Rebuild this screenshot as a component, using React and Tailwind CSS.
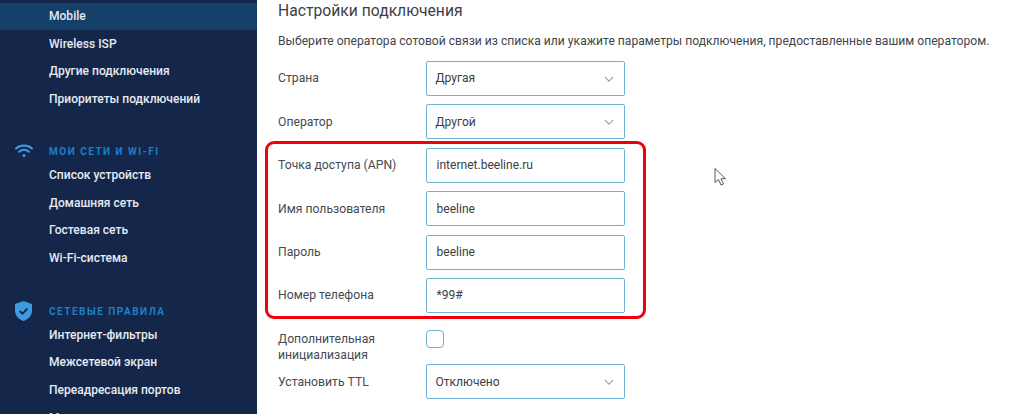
import React from "react";

const font = { fontFamily: '"Roboto", "Liberation Sans", sans-serif' };

function NavRow({ children, active }) {
  return (
    <div className={`h-[27.6px] pl-[49px] flex items-center text-[12.05px] font-medium text-[#e6ebf2] ${active ? "bg-[#14406a]" : ""}`}>
      {children}
    </div>
  );
}

function Heading({ icon, children, className }) {
  return (
    <div className={`h-[20px] flex items-center ${className}`}>
      <div className="w-[49px] pl-[15px] shrink-0 flex items-center">{icon}</div>
      <span className="text-[10px] font-bold tracking-[1.5px] text-[#1b80c8]">{children}</span>
    </div>
  );
}

const Wifi = (
  <svg width="18" height="14" viewBox="0 0 18 14" fill="none" stroke="#3d9be0" strokeWidth="2" strokeLinecap="round">
    <path d="M1 4.6C5.6 .6 12.4 .6 17 4.6" />
    <path d="M4 7.8c3-2.5 7-2.5 10 0" />
    <circle cx="9" cy="11.6" r="1.5" fill="#3d9be0" stroke="none" />
  </svg>
);

const Shield = (
  <svg width="17" height="20" viewBox="0 0 17 20" className="mt-[-1px]">
    <path d="M8.5 0 17 3v6.6c0 5-3.4 8.600-8.500 10.400C3.400 18.200 0 14.600 0 9.600V3z" fill="#3d9be0" />
    <path d="M4.700 10l2.800 2.700 5-5" fill="none" stroke="#14274a" strokeWidth="1.800" />
  </svg>
);

function Chevron() {
  return (
    <svg width="10" height="6" viewBox="0 0 12 7" fill="none" stroke="#7fa9c8" strokeWidth="1.400">
      <path d="M1 1l5 5 5-5" />
    </svg>
  );
}

function Field({ label, value, select }) {
  return (
    <div className="flex items-center h-[35px] mb-[8.400px]">
      <div className="w-[148px] shrink-0 text-[12.2px] text-[#444b52]">{label}</div>
      <div className={`w-[199px] h-[35px] border-[1.500px] border-[#6fb4d6] rounded-[2px] flex items-center justify-between text-[12.05px] text-[#3a4046] bg-white ${select ? "pl-[8.500px] pr-[10px]" : "pl-[9.500px]"}`}>
        <span>{value}</span>
        {select && <Chevron />}
      </div>
    </div>
  );
}

export default function App() {
  return (
    <div style={font} className="relative w-[1024px] h-[414px] overflow-hidden bg-white flex">
      <aside className="w-[257px] shrink-0 h-full overflow-hidden bg-[#14274a] pt-[2.500px]">
        <NavRow active>Mobile</NavRow>
        <NavRow>Wireless ISP</NavRow>
        <NavRow>Другие подключения</NavRow>
        <NavRow>Приоритеты подключений</NavRow>
        <Heading icon={Wifi} className="mt-[28.300px]">МОИ СЕТИ И WI-FI</Heading>
        <NavRow>Список устройств</NavRow>
        <NavRow>Домашняя сеть</NavRow>
        <NavRow>Гостевая сеть</NavRow>
        <NavRow>Wi-Fi-система</NavRow>
        <Heading icon={Shield} className="mt-[29.500px]">СЕТЕВЫЕ ПРАВИЛА</Heading>
        <NavRow>Интернет-фильтры</NavRow>
        <NavRow>Межсетевой экран</NavRow>
        <NavRow>Переадресация портов</NavRow>
        <NavRow>Маршрутизация</NavRow>
      </aside>

      <main className="flex-1 pl-[21px]">
        <h1 className="pt-[1px] text-[15.700px] leading-[20px] font-normal text-[#3a4046]">Настройки подключения</h1>
        <p className="mt-[10.500px] mb-[10.500px] h-[19px] leading-[19px] text-[12.130px] text-[#3f464c] whitespace-nowrap">
          Выберите оператора сотовой связи из списка или укажите параметры подключения, предоставленные вашим оператором.
        </p>
        <Field label="Страна" value="Другая" select />
        <Field label="Оператор" value="Другой" select />
        <Field label="Точка доступа (APN)" value="internet.beeline.ru" />
        <Field label="Имя пользователя" value="beeline" />
        <Field label="Пароль" value="beeline" />
        <Field label="Номер телефона" value="*99#" />
        <div className="flex mt-[17.500px] h-[44px]">
          <div className="w-[148px] shrink-0 text-[12.200px] leading-[16px] text-[#444b52] pt-[1px]">Дополнительная<br />инициализация</div>
          <div className="w-[18px] h-[18px] border-[1.500px] border-[#6fb4d6] rounded-[4px]" />
        </div>
        <div className="mt-[-10px]">
          <Field label="Установить TTL" value="Отключено" select />
        </div>
      </main>

      <div className="absolute left-[265px] top-[141px] w-[381px] h-[178px] border-[3.500px] border-[#f00008] rounded-[9px]" />

      <svg className="absolute left-[713px] top-[167px]" width="15" height="20" viewBox="0 0 15 20" fill="none">
        <path d="M2 1.500v14l3.500-3 2.500 5.500 2.500-1-2.500-5.300h4.500z" fill="#ffffff" stroke="#55595e" strokeWidth="1" />
      </svg>
    </div>
  );
}
